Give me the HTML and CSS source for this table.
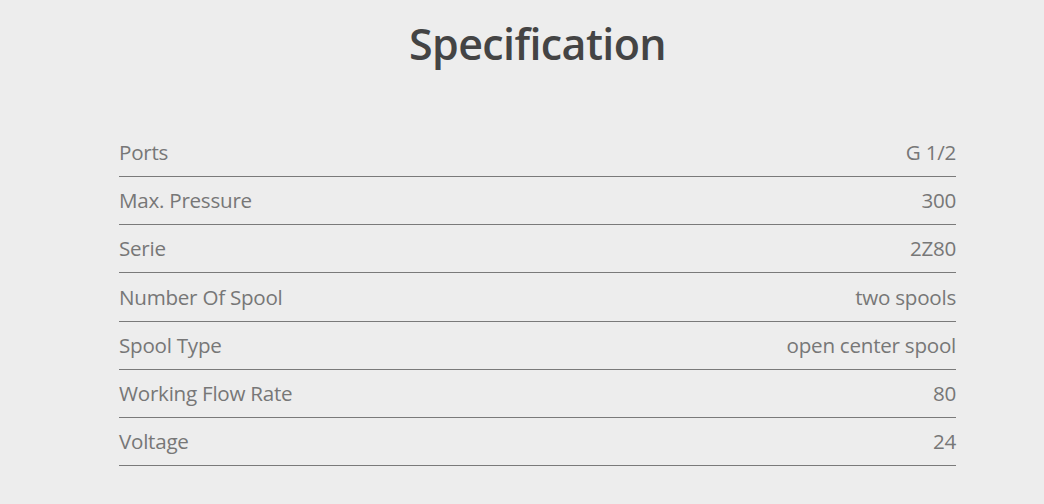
FILE: index.html
```html
<!DOCTYPE html>
<html>
<head>
<meta charset="utf-8">
<link rel="stylesheet" href="styles.css">
</head>
<body>
<section class="spec">
  <h1 class="spec-title">Specification</h1>
  <div class="spec-table">
    <div class="spec-row"><span class="spec-key">Ports</span><span class="spec-val">G 1/2</span></div>
    <div class="spec-row"><span class="spec-key">Max. Pressure</span><span class="spec-val">300</span></div>
    <div class="spec-row"><span class="spec-key">Serie</span><span class="spec-val">2Z80</span></div>
    <div class="spec-row"><span class="spec-key">Number Of Spool</span><span class="spec-val">two spools</span></div>
    <div class="spec-row"><span class="spec-key">Spool Type</span><span class="spec-val">open center spool</span></div>
    <div class="spec-row"><span class="spec-key">Working Flow Rate</span><span class="spec-val">80</span></div>
    <div class="spec-row"><span class="spec-key">Voltage</span><span class="spec-val">24</span></div>
  </div>
</section>
</body>
</html>
```
FILE: styles.css
```css
html, body {
  margin: 0;
  padding: 0;
  background: #ededed;
  height: 100%;
}
body {
  font-family: "Open Sans", "Noto Sans", sans-serif;
}
.spec {
  width: 837px;
  margin-left: 119px;
  padding-top: 12px;
}
.spec-title {
  margin: 0;
  text-align: center;
  font-size: 43px;
  font-weight: 600;
  color: #444;
  line-height: 64px;
  letter-spacing: -0.6px;
}
.spec-table {
  margin-top: 53px;
}
.spec-row {
  display: flex;
  justify-content: space-between;
  align-items: center;
  padding-bottom: 1px;
  box-sizing: border-box;
  height: 48.17px;
  border-bottom: 1px solid #7a7a7a;
  font-size: 20.6px;
  color: #777;
  letter-spacing: -0.25px;
}
```
